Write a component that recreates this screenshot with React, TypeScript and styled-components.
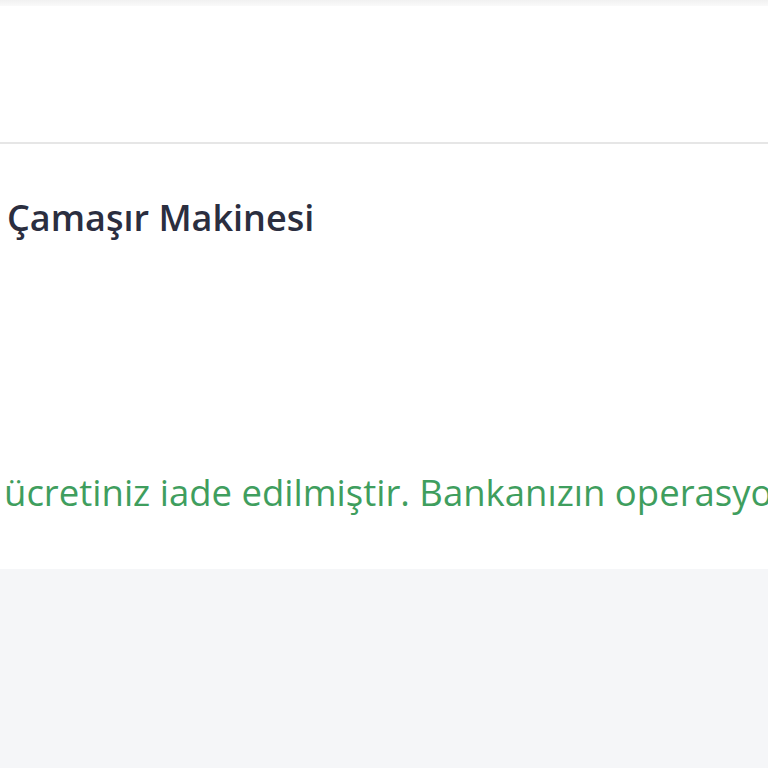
import React from "react";
import styled, { createGlobalStyle } from "styled-components";

const Global = createGlobalStyle`
  html, body { margin: 0; padding: 0; background: #f5f6f8; }
  body { font-family: "Open Sans", "Noto Sans", sans-serif; }
`;

const Page = styled.div`
  width: 768px;
  height: 768px;
  overflow: hidden;
  background: #f5f6f8;
  display: flex;
  flex-direction: column;
`;

const TopStrip = styled.div`
  height: 6px;
  background: linear-gradient(#f1f1f1, #fafafa);
`;

const Header = styled.div`
  height: 136px;
  background: #ffffff;
  border-bottom: 2px solid #e6e6e6;
`;

const Card = styled.div`
  height: 425px;
  background: #ffffff;
  display: flex;
  flex-direction: column;
  padding: 0 0 0 7px;
  overflow: hidden;
`;

const Title = styled.h1`
  margin: 50px 0 0 0;
  font-size: 36px;
  font-weight: 600;
  color: #2b2e3f;
  line-height: 48px;
  white-space: nowrap;
`;

const Notice = styled.p`
  margin: 226px 0 0 -3px;
  font-size: 36.5px;
  font-weight: 400;
  color: #3f9e5e;
  line-height: 48px;
  white-space: nowrap;
  overflow: hidden;
  width: 764px;
`;

export default function App() {
  return (
    <Page>
      <Global />
      <TopStrip />
      <Header />
      <Card>
        <Title>Çamaşır Makinesi</Title>
        <Notice>ücretiniz iade edilmiştir. Bankanızın operasyonel süreçlerine bağlı olarak</Notice>
      </Card>
    </Page>
  );
}
